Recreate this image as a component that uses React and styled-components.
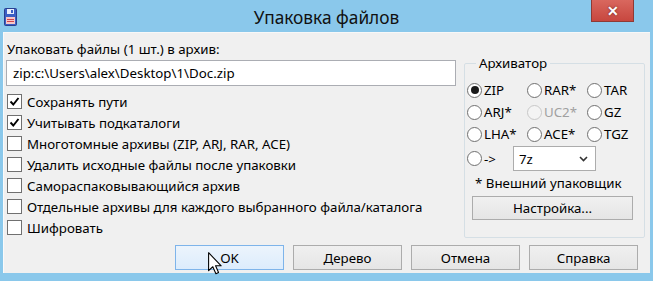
import React from "react";
import styled, { createGlobalStyle } from "styled-components";

const GlobalStyle = createGlobalStyle`
  html, body {
    margin: 0;
    padding: 0;
    background: #8ac8eb;
  }
  body {
    font-family: "Noto Sans", "Liberation Sans", sans-serif;
    font-size: 13.3px;
    color: #000;
  }
`;

const checks = [
  { label: "Сохранять пути", checked: true },
  { label: "Учитывать подкаталоги", checked: true },
  { label: "Многотомные архивы (ZIP, ARJ, RAR, ACE)", checked: false },
  { label: "Удалить исходные файлы после упаковки", checked: false },
  { label: "Самораспаковывающийся архив", checked: false },
  { label: "Отдельные архивы для каждого выбранного файла/каталога", checked: false },
  { label: "Шифровать", checked: false },
];

const radios = [
  { label: "ZIP", selected: true },
  { label: "RAR*" },
  { label: "TAR" },
  { label: "ARJ*" },
  { label: "UC2*", disabled: true },
  { label: "GZ" },
  { label: "LHA*" },
  { label: "ACE*" },
  { label: "TGZ" },
];

const FloppyIcon = () => (
  <svg width="13" height="18" viewBox="0 0 13 18">
    <rect x="0.5" y="0.5" width="12" height="17" rx="1" fill="#3b5fc4" stroke="#2a3f8f" />
    <rect x="3" y="1" width="7" height="5" fill="#e8eefc" />
    <rect x="7" y="2" width="2" height="3" fill="#3b5fc4" />
    <rect x="2" y="9" width="9" height="7" fill="#f7c6c6" />
    <line x1="3" y1="11.5" x2="10" y2="11.5" stroke="#d0454c" />
    <line x1="3" y1="13.5" x2="10" y2="13.5" stroke="#d0454c" />
  </svg>
);

const Cursor = () => (
  <svg width="15" height="23" viewBox="0 0 12.5 19">
    <path
      d="M0.5 0.5 L0.5 15.5 L4 12.2 L6.6 18 L8.8 17 L6.3 11.4 L11 11.4 Z"
      fill="#fff"
      stroke="#000"
      strokeWidth="0.9"
      strokeLinejoin="round"
    />
  </svg>
);

const CheckMark = () => (
  <svg width="11" height="11" viewBox="0 0 11 11">
    <path d="M1.5 5.5 L4.3 8.5 L9.5 2" fill="none" stroke="#000" strokeWidth="1.9" />
  </svg>
);

const Chevron = () => (
  <svg width="9" height="6" viewBox="0 0 9 6">
    <path d="M1 1 L4.5 4.5 L8 1" fill="none" stroke="#333" strokeWidth="1.6" />
  </svg>
);

export default function App() {
  return (
    <>
      <GlobalStyle />
      <Window>
        <TitleBar>
          <IconSlot>
            <FloppyIcon />
          </IconSlot>
          <Title>Упаковка файлов</Title>
          <CloseSlot>
            <CloseButton>✕</CloseButton>
          </CloseSlot>
        </TitleBar>
        <Body>
          <TopRow>
            <LeftColumn>
              <FieldLabel>Упаковать файлы (1 шт.) в архив:</FieldLabel>
              <PathInput>zip:c:\Users\alex\Desktop\1\Doc.zip</PathInput>
              <CheckList>
                {checks.map((c) => (
                  <CheckRow key={c.label}>
                    <CheckBox>{c.checked && <CheckMark />}</CheckBox>
                    <span>{c.label}</span>
                  </CheckRow>
                ))}
              </CheckList>
            </LeftColumn>
            <Group>
              <Legend>Архиватор</Legend>
              <RadioGrid>
                {radios.map((r) => (
                  <RadioRow key={r.label} $disabled={r.disabled}>
                    <RadioCircle $disabled={r.disabled}>{r.selected && <RadioDot />}</RadioCircle>
                    <span>{r.label}</span>
                  </RadioRow>
                ))}
              </RadioGrid>
              <CustomRow>
                <RadioRow>
                  <RadioCircle />
                  <span>-&gt;</span>
                </RadioRow>
                <Select>
                  <span>7z</span>
                  <Chevron />
                </Select>
              </CustomRow>
              <Note>* Внешний упаковщик</Note>
              <WideButton>Настройка...</WideButton>
            </Group>
          </TopRow>
          <ButtonRow>
            <DialogButton $focused>
              OK
              <CursorSlot>
                <Cursor />
              </CursorSlot>
            </DialogButton>
            <DialogButton>Дерево</DialogButton>
            <DialogButton>Отмена</DialogButton>
            <DialogButton>Справка</DialogButton>
          </ButtonRow>
        </Body>
      </Window>
    </>
  );
}

const Window = styled.div`
  width: 653px;
  height: 281px;
  display: flex;
  flex-direction: column;
  background: #8ac8eb;
  overflow: hidden;
`;

const TitleBar = styled.div`
  height: 32px;
  display: grid;
  grid-template-columns: 1fr auto 1fr;
  align-items: center;
`;

const IconSlot = styled.div`
  display: flex;
  padding-left: 4px;
  padding-top: 1px;
`;

const Title = styled.div`
  font-size: 17.3px;
  color: #111;
  padding-top: 2px;
`;

const CloseSlot = styled.div`
  display: flex;
  justify-content: flex-end;
  align-self: start;
  padding-right: 19px;
`;

const CloseButton = styled.div`
  width: 43px;
  height: 22px;
  background: linear-gradient(#d9675e, #c7473f);
  border: 1px solid #8f3a35;
  border-top: none;
  box-sizing: border-box;
  color: #fff;
  font-weight: bold;
  font-size: 14px;
  display: flex;
  align-items: center;
  justify-content: center;
  text-shadow: 0 0 2px #5a1a16;
`;

const Body = styled.div`
  flex: 1;
  margin: 0 3px 8px 3px;
  background: #f0f0f0;
  border-top: 1px solid #f8f8f8;
  border-left: 1px solid #fafafa;
  display: flex;
  flex-direction: column;
  padding: 8px 5px 0 2px;
`;

const TopRow = styled.div`
  display: flex;
  gap: 8px;
`;

const LeftColumn = styled.div`
  width: 450px;
  display: flex;
  flex-direction: column;
`;

const FieldLabel = styled.div`
  line-height: 16px;
  padding-left: 1px;
`;

const PathInput = styled.div`
  margin-top: 3px;
  height: 26px;
  box-sizing: border-box;
  background: #fff;
  border: 1px solid #abadb3;
  display: flex;
  align-items: center;
  padding-left: 6px;
`;

const CheckList = styled.div`
  margin-top: 5px;
  display: flex;
  flex-direction: column;
`;

const CheckRow = styled.div`
  height: 21px;
  display: flex;
  align-items: center;
  gap: 5px;
  padding-left: 1px;
`;

const CheckBox = styled.div`
  width: 15px;
  height: 15px;
  box-sizing: border-box;
  border: 1px solid #707070;
  background: #fff;
  display: flex;
  align-items: center;
  justify-content: center;
`;

const Group = styled.fieldset`
  width: 181px;
  box-sizing: border-box;
  margin: 14px 0 0 0;
  border: 1px solid #d5dfe5;
  border-radius: 2px;
  padding: 8px 0 10px 2px;
  display: flex;
  flex-direction: column;
  min-width: 0;
`;

const Legend = styled.legend`
  padding: 0 3px;
  margin-left: 9px;
  line-height: 16px;
`;

const RadioGrid = styled.div`
  display: grid;
  grid-template-columns: 60px 60px 58px;
`;

const RadioRow = styled.div`
  height: 22px;
  display: flex;
  align-items: center;
  gap: 2px;
  color: ${(p) => (p.$disabled ? "#a0a0a0" : "#000")};
`;

const RadioCircle = styled.div`
  width: 15px;
  height: 15px;
  box-sizing: border-box;
  border-radius: 50%;
  border: 1px solid ${(p) => (p.$disabled ? "#c8c8c8" : "#707070")};
  background: ${(p) => (p.$disabled ? "#f4f4f4" : "#fff")};
  display: flex;
  align-items: center;
  justify-content: center;
`;

const RadioDot = styled.div`
  width: 8px;
  height: 8px;
  border-radius: 50%;
  background: #1a1a1a;
`;

const CustomRow = styled.div`
  display: flex;
  align-items: center;
  gap: 17px;
  margin-top: 1px;
`;

const Select = styled.div`
  width: 83px;
  height: 25px;
  box-sizing: border-box;
  background: #fff;
  border: 1px solid #acacac;
  display: flex;
  align-items: center;
  justify-content: space-between;
  padding: 0 7px 0 5px;
`;

const Note = styled.div`
  line-height: 16px;
  margin-top: 4px;
  padding-left: 8px;
`;

const WideButton = styled.div`
  width: 161px;
  height: 24px;
  box-sizing: border-box;
  margin: 5px 0 0 5px;
  border: 1px solid #acacac;
  background: linear-gradient(#f0f0f0, #e5e5e5);
  display: flex;
  align-items: center;
  justify-content: center;
`;

const ButtonRow = styled.div`
  display: flex;
  justify-content: flex-end;
  gap: 9px;
  margin-top: auto;
  margin-bottom: 3px;
  padding-right: 7px;
`;

const DialogButton = styled.div`
  position: relative;
  width: 109px;
  height: 25px;
  box-sizing: border-box;
  border: 1px solid ${(p) => (p.$focused ? "#7eb4ea" : "#acacac")};
  background: ${(p) => (p.$focused ? "linear-gradient(#ecf4fc, #dcecfc)" : "linear-gradient(#f0f0f0, #e5e5e5)")};
  display: flex;
  align-items: center;
  justify-content: center;
`;

const CursorSlot = styled.div`
  position: absolute;
  left: 32px;
  top: 6px;
  display: flex;
`;
